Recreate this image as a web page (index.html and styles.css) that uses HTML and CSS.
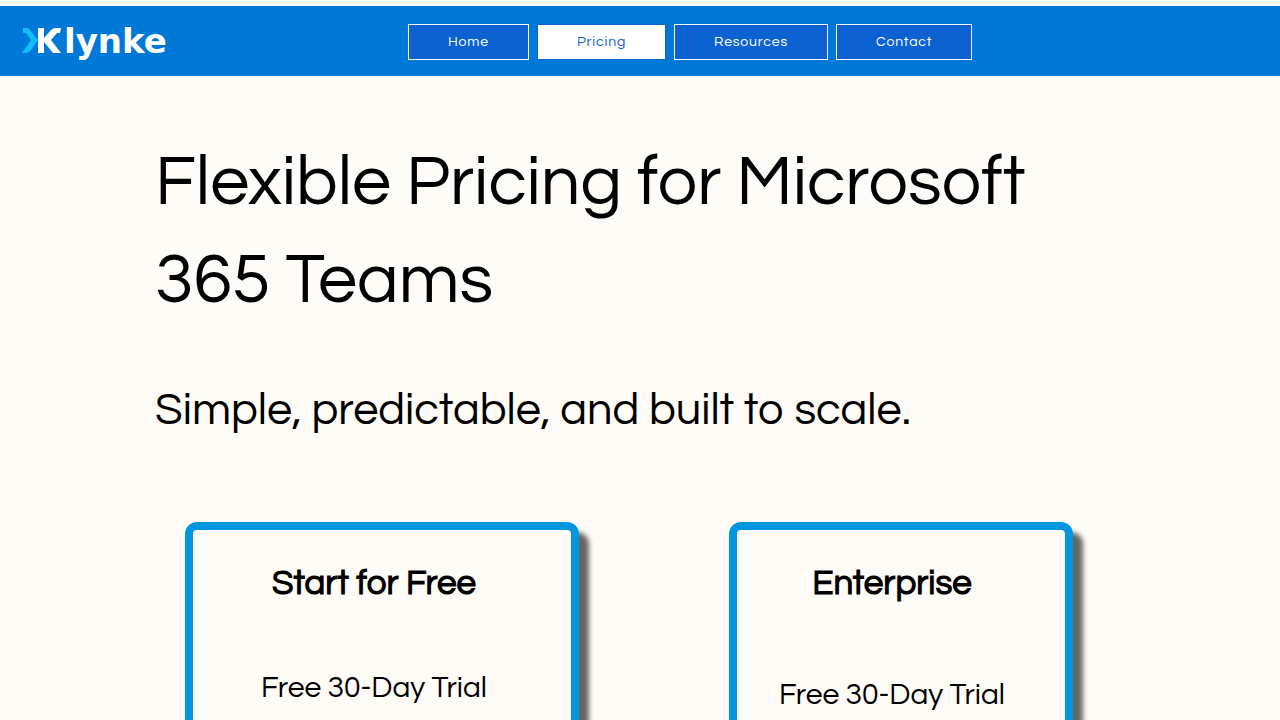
FILE: index.html
```html
<!DOCTYPE html>
<html lang="en">
<head>
<meta charset="utf-8">
<meta name="viewport" content="width=device-width, initial-scale=1">
<title>Klynke Pricing</title>
<link rel="stylesheet" href="styles.css">
</head>
<body>
<header class="site-header">
  <a class="logo" href="#" aria-label="Klynke home">
    <svg class="logo-mark" viewBox="0 0 40 28" aria-hidden="true">
      <path fill="#10bdf5" d="M1 1H5Q7 1 8 3L16 13L8 24Q6 26 4 26H0L9 13L4 6H1Z"/>
      <path fill="#fff" d="M16 1H22V11L29 3Q31 1 34 1H39L38 6H35L29 13L39 26H31L22 15V26H16Z"/>
    </svg>
    <span class="logo-text">lynke</span>
  </a>
  <nav class="nav" aria-label="Main">
    <a class="nav-link" href="#">Home</a>
    <a class="nav-link current" href="#" aria-current="page">Pricing</a>
    <a class="nav-link" href="#">Resources</a>
    <a class="nav-link" href="#">Contact</a>
  </nav>
</header>
<main class="content">
  <h1 class="title">Flexible Pricing for Microsoft 365 Teams</h1>
  <p class="tagline">Simple, predictable, and built to scale.</p>
  <div class="plans">
    <section class="plan">
      <h2 class="plan-name">Start for Free</h2>
      <p class="plan-offer">Free 30-Day Trial</p>
    </section>
    <section class="plan enterprise">
      <h2 class="plan-name">Enterprise</h2>
      <p class="plan-offer">Free 30-Day Trial</p>
    </section>
  </div>
</main>
</body>
</html>
```
FILE: styles.css
```css
* { box-sizing: border-box; }
body {
  margin: 0;
  background: #fffcf7;
  color: #000;
  font-family: Questrial, Inter, "Liberation Sans", sans-serif;
}
h1, h2, p { margin: 0; font-weight: 400; }
.site-header {
  display: grid;
  grid-template-columns: 386px 1fr;
  align-items: center;
  height: 76px;
  padding: 0 22px;
  border-top: 6px solid #fbfaf6;
  background: #0078d7;
}
.nav { display: flex; gap: 8px; padding-top: 2px; }
.logo { display: flex; align-items: center; gap: 2px; text-decoration: none; color: #fff; }
.logo-mark { width: 40px; height: 28px; overflow: visible; }
.logo-text {
  font: 700 34px/36px "DejaVu Sans", Verdana, sans-serif;
}
.nav-link {
  padding: 0 39px;
  border: 1px solid #fff;
  background: #0d62d1;
  color: #fff;
  font-size: 14px;
  line-height: 34px;
  letter-spacing: 0.06em;
  text-decoration: none;
}
.nav-link.current { border-color: #0d62d1; background: #fff; color: #0d62d1; }
.content { max-width: 970px; margin: 0 auto; padding-top: 58px; }
.title { font-size: 70px; line-height: 98px; }
.tagline { margin-top: 49px; font-size: 45px; line-height: 63px; }
.plans {
  display: grid;
  grid-template-columns: 394fr 344fr;
  gap: 150px;
  padding: 80px 52px 60px 30px;
}
.plan {
  min-height: 420px;
  padding: 29px 36px 28px 20px;
  border: 8px solid #0096e0;
  border-radius: 12px;
  box-shadow: 10px 10px 5px rgba(0, 0, 0, 0.6);
  text-align: center;
}
.plan-name { font-size: 35px; font-weight: 700; line-height: 49px; }
.plan-offer { margin-top: 59px; font-size: 30px; line-height: 42px; }
.enterprise { padding-right: 38px; }
.enterprise .plan-offer { margin-top: 66px; }
```
